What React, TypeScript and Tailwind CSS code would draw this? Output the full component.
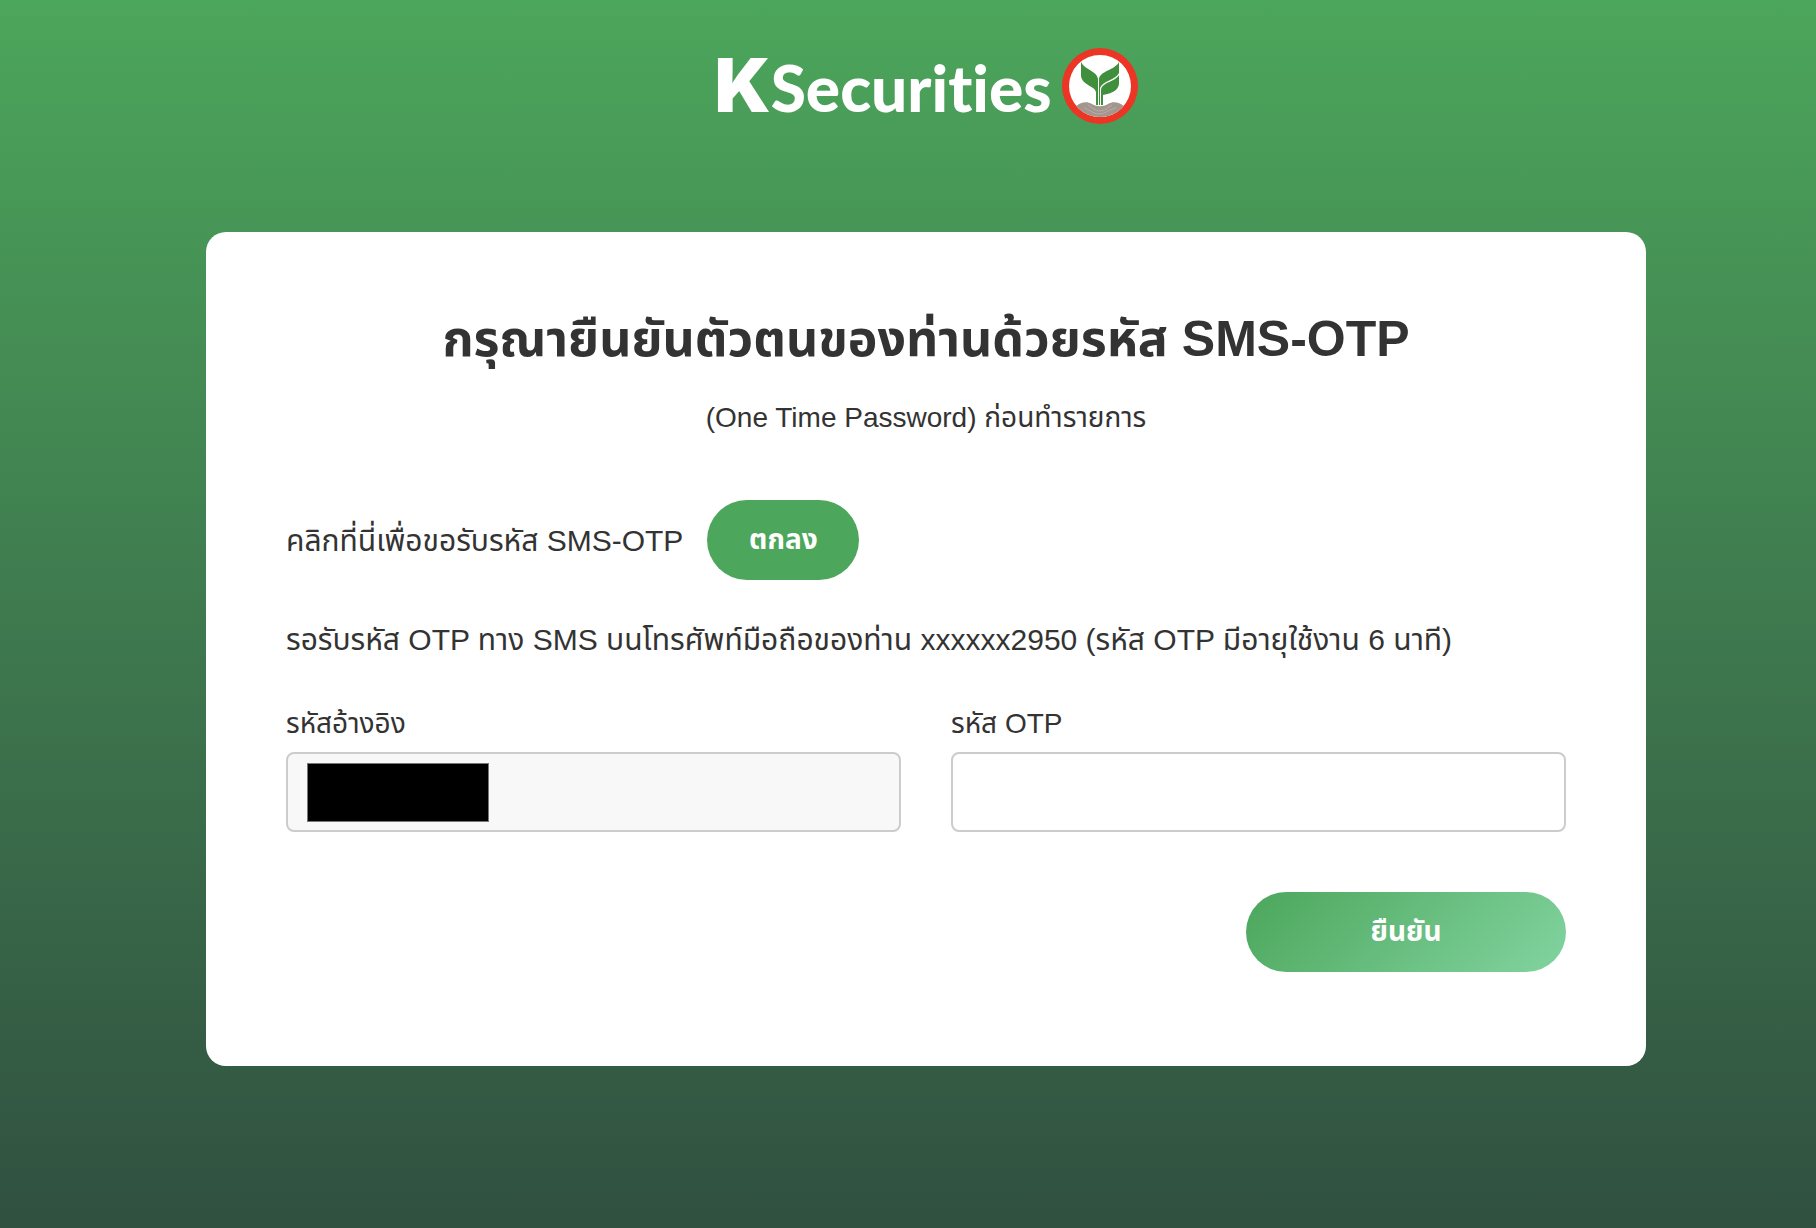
import { useState } from "react";

function KBankEmblem() {
  return (
    <svg viewBox="0 0 76 76" className="size-[76px]" aria-hidden="true">
      <defs>
        <clipPath id="emblem">
          <circle cx="38" cy="38" r="31" />
        </clipPath>
      </defs>
      <circle cx="38" cy="38" r="38" fill="#ec3524" />
      <circle cx="38" cy="38" r="31" fill="#fff" />
      {/* Soil */}
      <g clipPath="url(#emblem)">
        <path
          d="M8 62 L14 58 C19 54 25 53 30 56 C35 59 41 59 46 56 C51 53 57 54 62 58 L68 62 L60 66 C57 65 53 65 49 67 C43 70 33 70 27 67 C23 65 19 65 15 66 Z"
          fill="#a2968f"
        />
        <path
          d="M22 60 C27 61 31 66 37 66 C43 66 48 61 54 60 M26 57 C30 60 34 63 38 63 C42 63 46 60 50 57"
          fill="none"
          stroke="#b8aea8"
          strokeWidth="1"
        />
      </g>
      {/* Leaves */}
      <path
        d="M19 14 C23 22 35 23 36 31 L36 57 L34 57 L34 44 C33 38 20 37 19 28 Z"
        fill="#3f8f3c"
      />
      <path
        d="M57 14 C53 22 38 23 37 31 L37 57 L38 57 L38 40 C40 33 54 32 57 25 Z"
        fill="#3f8f3c"
      />
      <path
        d="M57 27 C53 34 40 34 39 42 L39 57 L41 57 L41 47 C46 46 57 44 57 35 Z"
        fill="#3f8f3c"
      />
    </svg>
  );
}

function Logo() {
  return (
    <div
      className="flex h-[76px] items-center gap-2.5 text-white"
      aria-label="KSecurities"
    >
      <div className="flex items-baseline leading-[72px]">
        <span className="font-['Inter'] text-[74px] font-black">K</span>
        <span className="font-['Lato',sans-serif] text-[64px] font-black [font-variant-ligatures:none]">
          Securities
        </span>
      </div>
      <KBankEmblem />
    </div>
  );
}

export default function App() {
  const [otp, setOtp] = useState("");

  return (
    <div
      lang="th"
      className="min-h-screen bg-linear-to-b from-[#4ca65b] to-[#305040] py-12 pr-4 pl-[52px] font-['Liberation_Sans','Noto_Sans_Thai',sans-serif] text-[#333]"
    >
      <header className="flex justify-center">
        <Logo />
      </header>

      <main className="mx-auto mt-[108px] max-w-[1440px] rounded-[20px] bg-white px-20 pt-[72px] pb-[94px]">
        <h1 className="text-center text-[50px] leading-[70px] font-bold">
          กรุณายืนยันตัวตนของท่านด้วยรหัส SMS-OTP
        </h1>
        <p className="mt-5 text-center text-[28px] leading-[48px]">
          (One Time Password) ก่อนทำรายการ
        </p>

        <div className="mt-[58px] flex items-center gap-6 text-[30px]">
          <span>คลิกที่นี่เพื่อขอรับรหัส SMS-OTP</span>
          <button
            type="button"
            className="h-20 w-[152px] rounded-[40px] bg-[#4ca65b] text-[28px] font-bold text-white"
          >
            ตกลง
          </button>
        </div>

        <p className="mt-9 text-[30px] leading-[48px]">
          รอรับรหัส OTP ทาง SMS บนโทรศัพท์มือถือของท่าน xxxxxx2950 (รหัส OTP
          มีอายุใช้งาน 6 นาที)
        </p>

        <form onSubmit={(e) => e.preventDefault()}>
          <div className="mt-9 grid grid-cols-2 gap-[50px]">
            <div>
              <label htmlFor="ref-code" className="block text-[28px] leading-[48px]">
                รหัสอ้างอิง
              </label>
              <div className="relative mt-1">
                <input
                  id="ref-code"
                  type="text"
                  readOnly
                  className="block h-20 w-full rounded-lg border-2 border-[#ccc] bg-[#f8f8f8] px-5 text-[28px]"
                />
                <span className="absolute top-[11px] left-[21px] h-[59px] w-[182px] border border-[#777] bg-black" />
              </div>
            </div>
            <div>
              <label htmlFor="otp" className="block text-[28px] leading-[48px]">
                รหัส OTP
              </label>
              <input
                id="otp"
                type="text"
                value={otp}
                onChange={(e) => setOtp(e.target.value)}
                className="mt-1 block h-20 w-full rounded-lg border-2 border-[#ccc] bg-white px-5 text-[28px]"
              />
            </div>
          </div>

          <div className="mt-[60px] flex justify-end">
            <button
              type="submit"
              className="h-20 w-80 rounded-[40px] bg-linear-[135deg,#4ca65b,#82d4a0] text-[28px] font-bold text-white"
            >
              ยืนยัน
            </button>
          </div>
        </form>
      </main>
    </div>
  );
}
